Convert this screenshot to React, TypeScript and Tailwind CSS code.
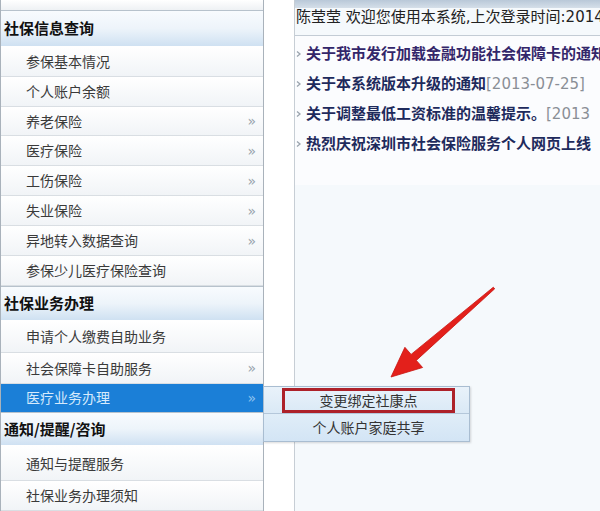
import React from 'react';

const cjk = { fontFamily: '"Noto Sans CJK SC", "Noto Sans", sans-serif' };
const mixed = { fontFamily: '"DejaVu Sans", "Noto Sans CJK SC", sans-serif' };

interface Row {
  label: string;
  arrow?: boolean;
  h: string;
  active?: boolean;
}

function Header({ label, h }: { label: string; h: string }) {
  return (
    <div
      className={`flex items-center pl-[3px] border-t border-[#b7c2cc] border-b border-b-white bg-gradient-to-b from-[#f8fbfe] via-[#edf4fa] to-[#cfe1f2] text-[15px] font-bold text-[#111] ${h}`}
    >
      {label}
    </div>
  );
}

function Item({ label, arrow, h, active }: Row) {
  return (
    <div
      className={`flex items-center justify-between pl-[25px] pr-[7px] border-b text-[14px] ${h} ${
        active
          ? 'bg-[#1b7fd7] border-[#1b7fd7] text-[#d6eafc]'
          : 'bg-gradient-to-b from-white to-[#f1f4f7] border-[#d9dee3] text-[#3a3a3a]'
      }`}
    >
      <span>{label}</span>
      {arrow && (
        <span
          className={`text-[14px] leading-none ${active ? 'text-[#8fc3ef]' : 'text-[#98a3ad]'}`}
          style={{ fontFamily: '"DejaVu Sans", sans-serif' }}
        >
          »
        </span>
      )}
    </div>
  );
}

function Bullet() {
  return (
    <svg width="9" height="8" viewBox="0 0 9 8" className="shrink-0 mr-[2px]">
      <path d="M2 1.5 L5 4 L2 6.5" fill="none" stroke="#9aa3ad" strokeWidth="1.3" />
    </svg>
  );
}

export default function App() {
  const section1: Row[] = [
    { label: '参保基本情况', h: 'h-[30px]' },
    { label: '个人账户余额', h: 'h-[30px]' },
    { label: '养老保险', arrow: true, h: 'h-[30px]' },
    { label: '医疗保险', arrow: true, h: 'h-[30px]' },
    { label: '工伤保险', arrow: true, h: 'h-[30px]' },
    { label: '失业保险', arrow: true, h: 'h-[30px]' },
    { label: '异地转入数据查询', arrow: true, h: 'h-[30px]' },
    { label: '参保少儿医疗保险查询', h: 'h-[30px]' },
  ];
  const section2: Row[] = [
    { label: '申请个人缴费自助业务', h: 'h-[32px]' },
    { label: '社会保障卡自助服务', arrow: true, h: 'h-[32px]' },
    { label: '医疗业务办理', arrow: true, h: 'h-[28px]', active: true },
  ];
  const section3: Row[] = [
    { label: '通知与提醒服务', h: 'h-[35px]' },
    { label: '社保业务办理须知', h: 'h-[30px]' },
  ];

  return (
    <div className="relative w-[600px] h-[511px] overflow-hidden bg-white flex" style={cjk}>
      {/* Sidebar */}
      <div className="w-[264px] shrink-0 flex flex-col border-l border-r border-[#a9b2bb] bg-white">
        <div className="h-[10px] shrink-0 bg-gradient-to-b from-white to-[#eef1f4]" />
        <Header label="社保信息查询" h="h-[37px]" />
        {section1.map((r) => (
          <Item key={r.label} {...r} />
        ))}
        <Header label="社保业务办理" h="h-[35px]" />
        {section2.map((r) => (
          <Item key={r.label} {...r} />
        ))}
        <Header label="通知/提醒/咨询" h="h-[34px]" />
        {section3.map((r) => (
          <Item key={r.label} {...r} />
        ))}
      </div>

      {/* Spacer column */}
      <div className="w-[31px] shrink-0 bg-white border-r border-[#c7ced5]" />

      {/* Main */}
      <div className="flex-1 min-w-0 overflow-hidden bg-[#f5f9fc] flex flex-col" style={mixed}>
        <div className="h-[8px] shrink-0 bg-gradient-to-b from-[#b9c8d8] to-[#d5dfe9]" />
        <div className="h-[27px] shrink-0 pl-[1px] text-[15px] leading-[18px] text-[#222] whitespace-nowrap">
          陈莹莹 欢迎您使用本系统,上次登录时间:2014年
        </div>
        <div className="border-t border-[#c3ccd5] bg-[#fbfcfe] pt-[3px] h-[150px]">
          <div className="flex items-center h-[30px] whitespace-nowrap text-[15px] font-bold text-[#33266a]">
            <Bullet />
            关于我市发行加载金融功能社会保障卡的通知
          </div>
          <div className="flex items-center h-[30px] whitespace-nowrap text-[15px]">
            <Bullet />
            <span className="font-bold text-[#1e2a5c]">关于本系统版本升级的通知</span>
            <span className="text-[#8a8f96]">[2013-07-25]</span>
          </div>
          <div className="flex items-center h-[30px] whitespace-nowrap text-[15px]">
            <Bullet />
            <span className="font-bold text-[#1e2a5c]">关于调整最低工资标准的温馨提示。</span>
            <span className="text-[#8a8f96]">[2013</span>
          </div>
          <div className="flex items-center h-[30px] whitespace-nowrap text-[15px] font-bold text-[#1e2a5c]">
            <Bullet />
            热烈庆祝深圳市社会保险服务个人网页上线
          </div>
        </div>
      </div>

      {/* Flyout submenu */}
      <div className="absolute left-[263px] top-[386px] w-[207px] border border-[#a9bdd1] bg-[#dcebf8] text-[14px] text-[#333] shadow-[1px_1px_2px_rgba(0,0,0,0.15)]">
        <div className="relative h-[27px] flex items-center justify-center pl-[4px] border-b border-[#b4c7da] bg-gradient-to-b from-[#e9f2fa] to-[#dae9f6]">
          变更绑定社康点
          <div className="absolute left-[18px] right-[14px] top-[1px] bottom-0 border-[3px] border-[#ad2129]" />
        </div>
        <div className="h-[27px] flex items-center justify-center pl-[4px] bg-gradient-to-b from-[#e0edf8] to-[#d3e5f5]">
          个人账户家庭共享
        </div>
      </div>

      {/* Annotation arrow */}
      <svg className="absolute left-0 top-0 pointer-events-none" width="600" height="511" viewBox="0 0 600 511">
        <polygon
          points="494.7,288.8 416.3,360.4 422.6,367.5 391,377 404.9,347.3 411.1,354.4 493.3,287.2"
          fill="#e3201b"
          stroke="#c8140f"
          strokeWidth="0.8"
          strokeLinejoin="round"
        />
      </svg>
    </div>
  );
}
